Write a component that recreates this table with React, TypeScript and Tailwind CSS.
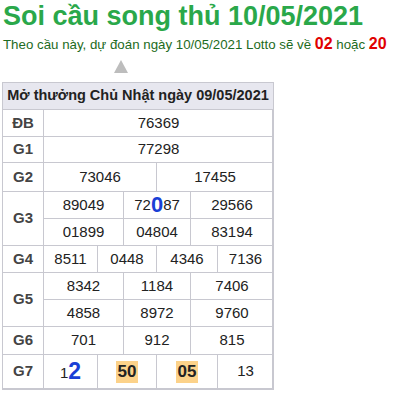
export default function App() {
  const cell = 'flex items-center justify-center border-r border-b border-[#c8c8d0] text-[15px] text-[#222]'
  const label = 'flex items-center justify-center border-r border-b border-[#c8c8d0] text-[15px] font-bold text-[#444]'
  return (
    <div className="w-[395px] h-[401px] bg-white font-['Liberation_Sans',Arial,sans-serif] overflow-hidden">
      <h1 className="pl-[3px] text-[27px] leading-[33px] font-bold text-[#2aa84a]">
        Soi cầu song thủ 10/05/2021
      </h1>
      <p className="pl-[3px] mt-[1px] text-[13.3px] leading-[20px] text-[#1d6b22]">
        Theo cầu này, dự đoán ngày 10/05/2021 Lotto sẽ về{' '}
        <b className="text-[16px] text-[#e00000]">02</b> hoặc{' '}
        <b className="text-[16px] text-[#e00000]">20</b>
      </p>
      <div className="flex h-[27px] pl-[114px] items-start pt-[5px]">
        <div className="w-0 h-0 border-l-[7px] border-r-[7px] border-b-[13px] border-l-transparent border-r-transparent border-b-[#bdbdbd]" />
      </div>
      <div className="ml-[2px] w-[272px] border-l border-t border-[#c8c8d0] border-r-2 border-b-2 border-r-[#c8c8d0] border-b-[#c8c8d0] grid grid-cols-[41px_54px_26px_33px_34px_27px_55px]">
        <div className="col-span-7 h-[27px] flex items-center justify-center whitespace-nowrap bg-[#e7e7ef] border-b border-[#c8c8d0] text-[14.5px] font-bold text-[#222]">
          Mở thưởng Chủ Nhật ngày 09/05/2021
        </div>

        <div className={`${label} h-[27px]`}>ĐB</div>
        <div className={`${cell} col-span-6 !border-r-0`}>76369</div>

        <div className={`${label} h-[26px]`}>G1</div>
        <div className={`${cell} col-span-6 !border-r-0`}>77298</div>

        <div className={`${label} h-[29px]`}>G2</div>
        <div className={`${cell} col-span-3`}>73046</div>
        <div className={`${cell} col-span-3 !border-r-0`}>17455</div>

        <div className={`${label} row-span-2`}>G3</div>
        <div className={`${cell} col-span-2 h-[27px]`}>89049</div>
        <div className={`${cell} col-span-2`}>
          72<span className="text-[22px] font-bold text-[#1a3fd6] leading-none">0</span>87
        </div>
        <div className={`${cell} col-span-2 !border-r-0`}>29566</div>
        <div className={`${cell} col-span-2 h-[27px]`}>01899</div>
        <div className={`${cell} col-span-2`}>04804</div>
        <div className={`${cell} col-span-2 !border-r-0`}>83194</div>

        <div className={`${label} h-[27px]`}>G4</div>
        <div className={cell}>8511</div>
        <div className={`${cell} col-span-2`}>0448</div>
        <div className={`${cell} col-span-2`}>4346</div>
        <div className={`${cell} !border-r-0`}>7136</div>

        <div className={`${label} row-span-2`}>G5</div>
        <div className={`${cell} col-span-2 h-[27px]`}>8342</div>
        <div className={`${cell} col-span-2`}>1184</div>
        <div className={`${cell} col-span-2 !border-r-0`}>7406</div>
        <div className={`${cell} col-span-2 h-[27px]`}>4858</div>
        <div className={`${cell} col-span-2`}>8972</div>
        <div className={`${cell} col-span-2 !border-r-0`}>9760</div>

        <div className={`${label} h-[28px]`}>G6</div>
        <div className={`${cell} col-span-2`}>701</div>
        <div className={`${cell} col-span-2`}>912</div>
        <div className={`${cell} col-span-2 !border-r-0`}>815</div>

        <div className={`${label} h-[33px] !border-b-0`}>G7</div>
        <div className={`${cell} !border-b-0`}>
          <span className="text-[15px] mt-[4px]">1</span>
          <span className="text-[23px] font-bold text-[#1a3fd6] leading-none">2</span>
        </div>
        <div className={`${cell} col-span-2 !border-b-0`}>
          <span className="bg-[#fcd28a] px-[2px] text-[17px] font-bold leading-[22px]">50</span>
        </div>
        <div className={`${cell} col-span-2 !border-b-0`}>
          <span className="bg-[#fcd28a] px-[2px] text-[17px] font-bold leading-[22px]">05</span>
        </div>
        <div className={`${cell} !border-r-0 !border-b-0`}>13</div>
      </div>
    </div>
  )
}
